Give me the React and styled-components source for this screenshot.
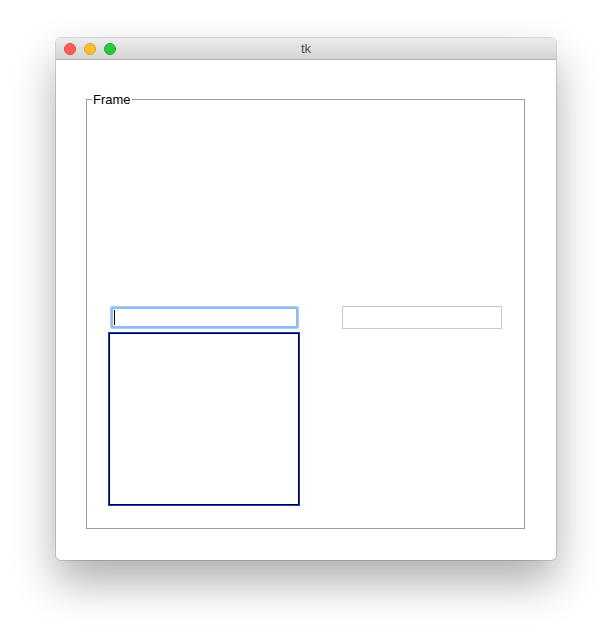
import styled, { createGlobalStyle } from 'styled-components';

const GlobalStyle = createGlobalStyle`
  html, body {
    margin: 0;
    padding: 0;
    background: #fff;
  }
  body {
    font-family: "Liberation Sans", Arial, sans-serif;
  }
`;

export default function App() {
  return (
    <Page>
      <GlobalStyle />
      <Window>
        <TitleBar>
          <Lights>
            <Light color="#fe5f57" edge="#e0443e" />
            <Light color="#febc2e" edge="#dea123" />
            <Light color="#28c840" edge="#1aab29" />
          </Lights>
          <Title>tk</Title>
        </TitleBar>

        <Content>
          <Frame>
            <Legend>Frame</Legend>
            <Grid>
              <FocusEntry>
                <Caret />
              </FocusEntry>
              <Entry />
              <Canvas />
            </Grid>
          </Frame>
        </Content>
      </Window>
    </Page>
  );
}

const Page = styled.div`
  width: 612px;
  height: 634px;
  padding: 38px 0 0 56px;
  box-sizing: border-box;
`;

const Window = styled.div`
  width: 500px;
  height: 522px;
  background: #fff;
  border-radius: 5px;
  overflow: hidden;
  box-shadow: 0 22px 44px rgba(0, 0, 0, 0.32), 0 0 0 1px rgba(0, 0, 0, 0.14);
  display: flex;
  flex-direction: column;
`;

const TitleBar = styled.div`
  position: relative;
  height: 21px;
  flex: none;
  background: linear-gradient(#ebebeb, #d5d5d5);
  border-bottom: 1px solid #b4b4b4;
  display: flex;
  align-items: center;
  justify-content: center;
`;

const Lights = styled.div`
  position: absolute;
  left: 8px;
  top: 5px;
  display: flex;
  gap: 8px;
`;

const Light = styled.span`
  box-sizing: border-box;
  width: 12px;
  height: 12px;
  border-radius: 50%;
  background: ${p => p.color};
  border: 1px solid ${p => p.edge};
`;

const Title = styled.span`
  font-size: 13px;
  color: #4d4d4d;
`;

const Content = styled.div`
  flex: 1;
  padding: 32px 31px 31px 30px;
  display: flex;
`;

const Frame = styled.fieldset`
  flex: 1;
  margin: 0;
  padding: 0 0 0 21px;
  min-width: 0;
  border: 1px solid #9c9c9c;
`;

const Legend = styled.legend`
  margin-left: -16px;
  padding: 0 1px;
  font-size: 13px;
  line-height: 15px;
  color: #000;
`;

const Grid = styled.div`
  display: grid;
  grid-template-columns: 192px 160px;
  grid-template-rows: 23px 174px;
  column-gap: 42px;
  row-gap: 3px;
  padding-top: 199px;
`;

const FocusEntry = styled.div`
  margin: 0 1px 0 2px;
  border: 1px solid #a9cbf5;
  box-shadow: inset 0 0 0 2px #8fbdf2;
  border-radius: 2px;
  background: #fff;
  display: flex;
  align-items: center;
  padding-left: 3px;
`;

const Caret = styled.span`
  width: 1px;
  height: 15px;
  background: #000;
`;

const Entry = styled.div`
  border: 1px solid #c9c9c9;
  background: #fff;
`;

const Canvas = styled.div`
  grid-column: 1;
  margin: 1px;
  border: 1px solid #000;
  outline: 1px solid #0a3cf0;
  background: #fff;
`;
